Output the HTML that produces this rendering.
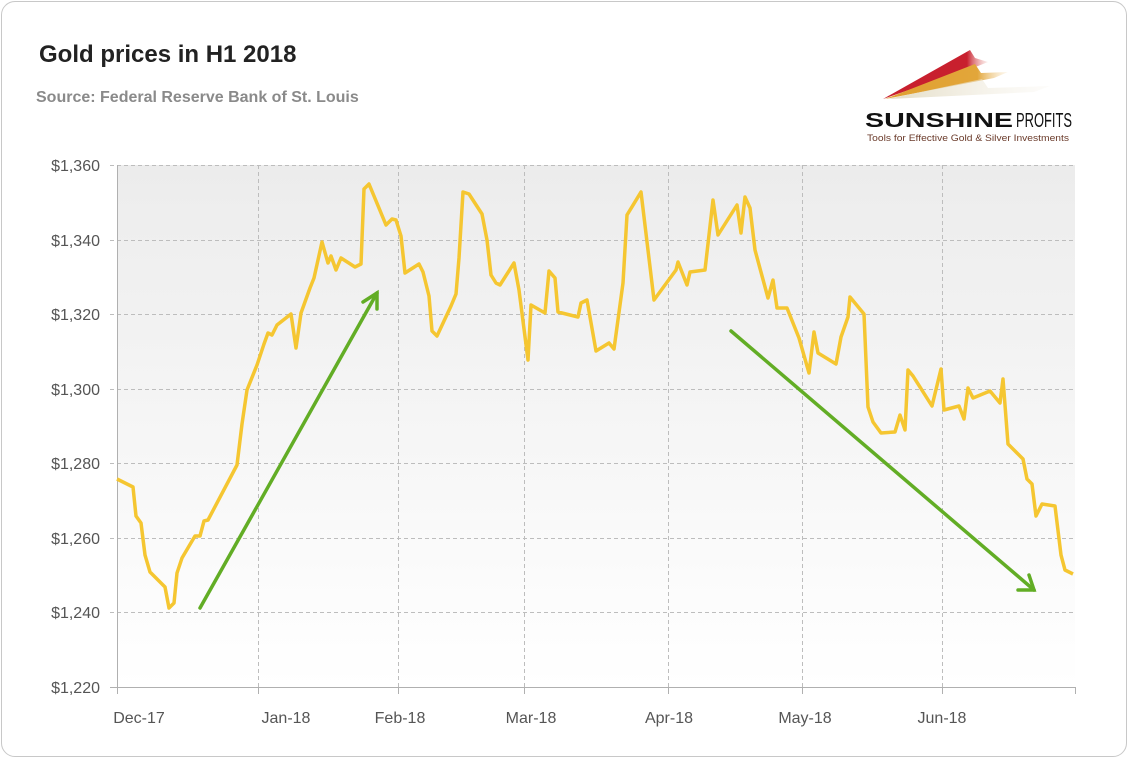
<!DOCTYPE html>
<html><head><meta charset="utf-8"><style>
body{margin:0;background:#fff;width:1128px;height:758px;overflow:hidden;font-family:"Liberation Sans",sans-serif}
.card{position:absolute;left:1px;top:1px;width:1124px;height:754px;border:1px solid #c8c8c8;border-radius:14px;background:#fff}
</style></head><body>
<div class="card"></div>
<svg width="1128" height="758" style="position:absolute;left:0;top:0">
<defs>
<linearGradient id="bg" x1="0" y1="0" x2="0" y2="1"><stop offset="0" stop-color="#ececec"/><stop offset="1" stop-color="#ffffff"/></linearGradient>
<linearGradient id="r1" x1="0" x2="1"><stop offset="0" stop-color="#c8202e"/><stop offset="0.8" stop-color="#c8202e"/><stop offset="1" stop-color="#f3c7c0" stop-opacity="0.3"/></linearGradient>
<linearGradient id="r2" x1="0" x2="1"><stop offset="0" stop-color="#e0a030"/><stop offset="0.75" stop-color="#e2a63a"/><stop offset="1" stop-color="#f6dcb0" stop-opacity="0.2"/></linearGradient>
<linearGradient id="r3" x1="0" x2="1"><stop offset="0" stop-color="#e3dcc4"/><stop offset="1" stop-color="#f4f0e6" stop-opacity="0.2"/></linearGradient>
</defs>
<text x="39" y="62" font-size="24" font-weight="bold" fill="#222">Gold prices in H1 2018</text>
<text x="36" y="102" font-size="16" font-weight="bold" fill="#8a8a8a">Source: Federal Reserve Bank of St. Louis</text>
<polygon points="883,99 970,50 975,58 988,62 978,66" fill="url(#r1)"/>
<polygon points="885,99 975,64 981,73 1008,72 994,78" fill="url(#r2)"/>
<polygon points="888,99 982,79 988,88 1050,86 1034,92" fill="url(#r3)"/>
<text x="865" y="127" font-size="20" font-weight="bold" fill="#111" textLength="148" lengthAdjust="spacingAndGlyphs">SUNSHINE</text>
<text x="1016" y="127" font-size="20" fill="#111" textLength="56" lengthAdjust="spacingAndGlyphs">PROFITS</text>
<text x="867" y="141" font-size="9.5" fill="#6a3a2a" textLength="202" lengthAdjust="spacingAndGlyphs">Tools for Effective Gold &amp; Silver Investments</text>
<rect x="117" y="165" width="958" height="522" fill="url(#bg)"/>
<g stroke="#bdbdbd" stroke-dasharray="4,3" stroke-width="1">
<line x1="110" y1="165.5" x2="1075" y2="165.5"/><line x1="110" y1="240.5" x2="1075" y2="240.5"/><line x1="110" y1="314.5" x2="1075" y2="314.5"/><line x1="110" y1="389.5" x2="1075" y2="389.5"/><line x1="110" y1="463.5" x2="1075" y2="463.5"/><line x1="110" y1="538.5" x2="1075" y2="538.5"/><line x1="110" y1="612.5" x2="1075" y2="612.5"/>
<line x1="258.5" y1="165" x2="258.5" y2="687"/><line x1="398.5" y1="165" x2="398.5" y2="687"/><line x1="524.5" y1="165" x2="524.5" y2="687"/><line x1="668.5" y1="165" x2="668.5" y2="687"/><line x1="802.5" y1="165" x2="802.5" y2="687"/><line x1="942.5" y1="165" x2="942.5" y2="687"/>
</g>
<line x1="117.5" y1="165" x2="117.5" y2="694" stroke="#b0b0b0"/>
<line x1="110" y1="687.5" x2="1075" y2="687.5" stroke="#b0b0b0"/>
<g stroke="#b0b0b0"><line x1="258.5" y1="687" x2="258.5" y2="694"/><line x1="398.5" y1="687" x2="398.5" y2="694"/><line x1="524.5" y1="687" x2="524.5" y2="694"/><line x1="668.5" y1="687" x2="668.5" y2="694"/><line x1="802.5" y1="687" x2="802.5" y2="694"/><line x1="942.5" y1="687" x2="942.5" y2="694"/><line x1="1075.5" y1="687" x2="1075.5" y2="694"/></g>
<g font-size="16" fill="#555" text-anchor="end">
<text x="100" y="171">$1,360</text><text x="100" y="246">$1,340</text><text x="100" y="320">$1,320</text><text x="100" y="395">$1,300</text><text x="100" y="469">$1,280</text><text x="100" y="544">$1,260</text><text x="100" y="618">$1,240</text><text x="100" y="693">$1,220</text>
</g>
<g font-size="16" fill="#555" text-anchor="middle">
<text x="139" y="723">Dec-17</text><text x="286" y="723">Jan-18</text><text x="400" y="723">Feb-18</text><text x="531" y="723">Mar-18</text><text x="669" y="723">Apr-18</text><text x="805" y="723">May-18</text><text x="942" y="723">Jun-18</text>
</g>
<polyline fill="none" stroke="#f5c631" stroke-width="3.5" stroke-linejoin="round" points="117,479 133,487 136,516 141,523 145,555 150,572 165,587 169,608 174,603 177,573 182,558 195,536 200,536 204,521 208,520 237,465 242,424 247,390 257,365 264,344 268,333 272,335 277,325 291,314 296,348 301,313 310,288 314,278 322,242 328,263 331,256 336,270 341,258 355,267 361,264 364,189 369,184 386,225 392,219 396,220 401,236 405,273 419,264 423,272 429,296 432,331 437,336 451,306 456,294 459,258 463,192 469,194 482,214 487,240 491,275 496,283 500,285 514,263 519,290 528,360 531,305 545,313 549,271 555,278 558,312 578,317 581,303 587,300 596,351 609,343 614,349 623,283 627,215 641,192 654,300 676,270 678,262 687,285 690,272 705,270 713,200 718,235 737,205 741,233 745,197 750,208 755,250 768,298 773,280 777,308 787,308 799,338 809,373 814,332 818,353 836,364 841,337 848,317 850,297 864,314 868,407 873,422 881,433 895,432 900,415 905,430 908,370 913,376 932,406 941,369 944,410 959,406 964,419 968,388 973,398 990,391 1000,403 1003,379 1008,444 1023,459 1027,479 1032,484 1036,516 1042,504 1055,506 1061,555 1065,570 1073,574"/>
<g stroke="#62ad25" stroke-width="3.5" fill="none" stroke-linecap="round">
<line x1="200" y1="608" x2="377" y2="293"/><polyline points="363,302 377,293 377,309"/>
<line x1="731" y1="331" x2="1034" y2="590"/><polyline points="1018,590 1034,590 1029,575"/>
</g>
</svg>
</body></html>
